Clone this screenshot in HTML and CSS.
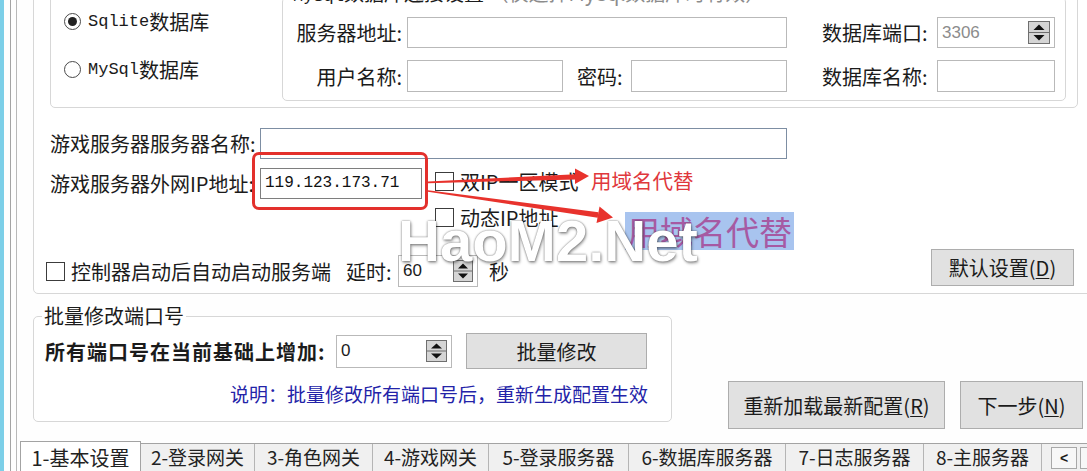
FILE: index.html
```html
<!DOCTYPE html>
<html lang="zh-CN">
<head>
    <meta charset="UTF-8">
    <meta name="viewport" content="width=device-width, initial-scale=1.0">
    <title>基本设置</title>
    <link rel="stylesheet" href="styles.css">
</head>
<body>
<div class="frame">
    <div class="edge">
        <span class="edge-blue"></span>
        <span class="edge-line"></span>
        <span class="edge-line second"></span>
    </div>

    <div class="dialog">
        <div class="sheet">
            <!-- 数据库 + 游戏服务器参数 -->
            <div class="group setup">
                <div class="group db-group">
                    <div class="db-kinds">
                        <div class="radio"><span class="radio-dot checked"></span><span class="mono">Sqlite</span>数据库</div>
                        <div class="radio"><span class="radio-dot"></span><span class="mono">MySql</span>数据库</div>
                    </div>

                    <div class="group mysql-box">
                        <div class="group-title"><span class="mono">MySql</span>数据库连接设置 <span class="muted">（仅选择MySql数据库时有效）</span></div>
                        <div class="field-row">
                            <span class="field-label addr-label">服务器地址:</span>
                            <span class="text-box addr-box"></span>
                            <span class="field-label port-label">数据库端口:</span>
                            <span class="text-box spin port-spin">
                                <span class="spin-value muted">3306</span>
                                <svg class="spin-btn" width="22" height="23" viewBox="0 0 22 23">
                                    <rect x="0.5" y="0.5" width="21" height="22" fill="#d5d5d5" stroke="#6f6f6f"/>
                                    <line x1="1" y1="11.5" x2="21" y2="11.5" stroke="#6f6f6f"/>
                                    <path d="M5.5 9 L11 3.5 L16.5 9 Z" fill="#111"/>
                                    <path d="M5.5 14 L16.5 14 L11 19.5 Z" fill="#111"/>
                                </svg>
                            </span>
                        </div>
                        <div class="field-row">
                            <span class="field-label user-label">用户名称:</span>
                            <span class="text-box user-box"></span>
                            <span class="field-label pass-label">密码:</span>
                            <span class="text-box pass-box"></span>
                            <span class="field-label dbname-label">数据库名称:</span>
                            <span class="text-box dbname-box"></span>
                        </div>
                    </div>
                </div>

                <div class="game-rows">
                    <div class="game-row">
                        <span class="game-label">游戏服务器服务器名称:</span>
                        <span class="text-box name-box"></span>
                    </div>
                    <div class="game-row ip-row">
                        <span class="game-label">游戏服务器外网IP地址:</span>
                        <span class="text-box ip-box">119.123.173.71</span>
                        <div class="ip-options">
                            <div class="check-item"><span class="check"></span>双IP一区模式</div>
                            <div class="check-item"><span class="check"></span>动态IP地址</div>
                        </div>
                    </div>
                </div>

                <div class="auto-row">
                    <span class="check"></span>
                    <span class="auto-text">控制器启动后自动启动服务端</span>
                    <span class="delay-label">延时:</span>
                    <span class="text-box spin delay-spin">
                        <span class="spin-value">60</span>
                        <svg class="spin-btn" width="20" height="22" viewBox="0 0 20 22">
                            <rect x="0.5" y="0.5" width="19" height="21" fill="#d5d5d5" stroke="#6f6f6f"/>
                            <line x1="1" y1="11" x2="19" y2="11" stroke="#6f6f6f"/>
                            <path d="M5 8.5 L10 3.5 L15 8.5 Z" fill="#111"/>
                            <path d="M5 13.5 L15 13.5 L10 18.5 Z" fill="#111"/>
                        </svg>
                    </span>
                    <span class="sec-label">秒</span>
                    <span class="btn default-btn">默认设置(<u>D</u>)</span>
                </div>
            </div>

            <div class="lower">
                <div class="group batch">
                    <div class="group-title">批量修改端口号</div>
                    <div class="batch-row">
                        <span class="batch-label">所有端口号在当前基础上增加:</span>
                        <span class="text-box spin batch-spin">
                            <span class="spin-value">0</span>
                            <svg class="spin-btn" width="21" height="22" viewBox="0 0 21 22">
                                <rect x="0.5" y="0.5" width="20" height="21" fill="#d5d5d5" stroke="#6f6f6f"/>
                                <line x1="1" y1="11" x2="20" y2="11" stroke="#6f6f6f"/>
                                <path d="M5 8.5 L10.5 3.5 L16 8.5 Z" fill="#111"/>
                                <path d="M5 13.5 L16 13.5 L10.5 18.5 Z" fill="#111"/>
                            </svg>
                        </span>
                        <span class="btn batch-btn">批量修改</span>
                    </div>
                    <div class="batch-note">说明：批量修改所有端口号后，重新生成配置生效</div>
                </div>

                <div class="actions">
                    <span class="btn reload-btn">重新加载最新配置(<u>R</u>)</span>
                    <span class="btn next-btn">下一步(<u>N</u>)</span>
                </div>
            </div>
        </div>

        <div class="tabs">
            <div class="tab active tab-1">1-基本设置</div>
            <div class="tab tab-2">2-登录网关</div>
            <div class="tab tab-3">3-角色网关</div>
            <div class="tab tab-4">4-游戏网关</div>
            <div class="tab tab-5">5-登录服务器</div>
            <div class="tab tab-6">6-数据库服务器</div>
            <div class="tab tab-7">7-日志服务器</div>
            <div class="tab tab-8">8-主服务器</div>
            <div class="tab-scroll">
                <span class="scroll-btn">&lt;</span>
                <span class="scroll-btn">&gt;</span>
            </div>
        </div>
    </div>

    <!-- 标注 -->
    <div class="mark-box"></div>
    <svg class="mark-arrows" width="1087" height="471" viewBox="0 0 1087 471">
        <polygon points="428,181.6 576,174.2 576,179.4 428,183.2" fill="#e8322c"/>
        <polygon points="575,168.5 589,176 575,184" fill="#e8322c"/>
        <polygon points="428,190.3 598.5,212.2 597.7,217.8 427.9,191.8" fill="#e8322c"/>
        <polygon points="599.5,206.5 613,217.5 596.5,223" fill="#e8322c"/>
    </svg>
    <div class="mark-note">用域名代替</div>
    <div class="mark-select">用域名代替</div>
    <div class="watermark">HaoM2.Net</div>
</div>
</body>
</html>
```

FILE: styles.css
```css
* {
    box-sizing: border-box;
}

body {
    margin: 0;
    background: #fff;
    font-family: "Noto Sans CJK SC", "Noto Sans", sans-serif;
    font-size: 20px;
    color: #1b1b1b;
}

.frame {
    position: relative;
    display: flex;
    width: 1087px;
    height: 471px;
    overflow: hidden;
    background: #fefefe;
}

/* 左边的窗口边框 */
.edge {
    display: flex;
    flex: none;
    width: 20px;
}
.edge-blue {
    width: 4px;
    background: #7ccfe8;
}
.edge-line {
    width: 1px;
    margin-left: 6px;
    background: #a4a4a4;
}
.edge-line.second {
    margin-left: 5px;
    background: #b9b9b9;
}

.dialog {
    flex: 1;
    min-width: 0;
    display: flex;
    flex-direction: column;
}
.sheet {
    flex: 1;
}

.mono {
    font-family: "Liberation Mono", monospace;
    font-size: 17px;
}
.muted {
    color: #8c8c8c;
}

/* 分组框 */
.group {
    position: relative;
    border: 1px solid #d7d7d7;
    border-radius: 5px;
    background: #fff;
}
.group-title {
    position: absolute;
    top: -12px;
    left: 8px;
    padding: 0 2px;
    background: #fff;
    line-height: 22px;
    white-space: nowrap;
}

.setup {
    margin: -20px -30px 0 13px;
    padding: 5px 0 6px 16px;
}

.db-group {
    display: flex;
    width: 1028px;
    padding: 10px 0 6px 13px;
}
.db-kinds {
    width: 218px;
    padding-top: 9px;
    display: flex;
    flex-direction: column;
    gap: 18px;
}
.radio {
    display: flex;
    align-items: center;
    height: 30px;
    white-space: nowrap;
}
.radio-dot {
    display: flex;
    align-items: center;
    justify-content: center;
    width: 17px;
    height: 17px;
    margin-right: 7px;
    border: 1px solid #4a4a4a;
    border-radius: 50%;
    background: #fff;
}
.radio-dot.checked::after {
    content: "";
    width: 9px;
    height: 9px;
    border-radius: 50%;
    background: #222;
}

.mysql-box {
    width: 784px;
    height: 104px;
    padding-top: 19px;
}
.mysql-box .group-title {
    top: -16px;
}
.field-row {
    display: flex;
    align-items: center;
    height: 31px;
}
.field-row + .field-row {
    height: 32px;
    margin-top: 12px;
}
.field-label {
    flex: none;
    white-space: nowrap;
}
.addr-label, .user-label {
    width: 119px;
    margin-right: 5px;
    text-align: right;
}
.port-label, .dbname-label {
    width: 110px;
    margin: 0 5px 0 35px;
}
.pass-label {
    width: 49px;
    margin: 0 5px 0 14px;
}

.text-box {
    flex: none;
    height: 100%;
    border: 1px solid #b9b9b9;
    background: #fff;
}
.addr-box {
    width: 380px;
}
.user-box, .pass-box {
    width: 156px;
}
.port-spin, .dbname-box {
    width: 118px;
}

/* 数字框 */
.spin {
    display: flex;
    align-items: center;
    justify-content: space-between;
    padding: 0 4px;
}
.spin-value {
    font-family: "Liberation Sans", sans-serif;
    font-size: 17px;
}
.spin-btn {
    display: block;
    flex: none;
}

/* 游戏服务器 */
.game-rows {
    margin-top: 20px;
}
.game-row {
    display: flex;
    align-items: flex-start;
}
.game-label {
    flex: none;
    width: 205px;
    height: 31px;
    margin-right: 5px;
    line-height: 31px;
    white-space: nowrap;
}
.name-box {
    width: 527px;
    height: 31px;
    border-color: #7d8ea3;
}
.ip-row {
    height: 61px;
    margin-top: 9px;
}
.ip-box {
    width: 162px;
    height: 31px;
    padding-left: 4px;
    border-color: #7e7e7e;
    font-family: "Liberation Mono", monospace;
    font-size: 16px;
    line-height: 29px;
    color: #111;
}
.ip-options {
    display: flex;
    flex-direction: column;
    gap: 16px;
    margin-left: 13px;
    padding-top: 3px;
}
.check-item {
    display: flex;
    align-items: center;
    height: 20px;
    white-space: nowrap;
}
.check {
    flex: none;
    width: 19px;
    height: 19px;
    margin-right: 6px;
    border: 1px solid #3c3c3c;
    background: #fff;
}

.auto-row {
    display: flex;
    align-items: center;
    width: 1028px;
    height: 32px;
    margin: 26px 0 0 -4px;
}
.auto-text {
    flex: none;
    width: 275px;
    white-space: nowrap;
}
.delay-label {
    flex: none;
    width: 52px;
}
.delay-spin {
    width: 80px;
}
.sec-label {
    margin-left: 11px;
}

/* 按钮 */
.btn {
    display: flex;
    align-items: center;
    justify-content: center;
    flex: none;
    background: #e1e1e1;
    border: 1px solid #adadad;
    white-space: nowrap;
    color: #1b1b1b;
}
.btn u {
    text-decoration-thickness: 1px;
    text-underline-offset: 2px;
}
.default-btn {
    align-self: flex-start;
    width: 143px;
    height: 37px;
    margin: -6px 0 0 auto;
}

/* 批量修改端口 */
.lower {
    display: flex;
    margin: 22px 0 0 13px;
}
.batch {
    flex: none;
    width: 639px;
    height: 106px;
    padding: 16px 0 0 10px;
}
.batch-row {
    display: flex;
    align-items: center;
    height: 36px;
}
.batch-label {
    flex: none;
    width: 292px;
    padding-left: 1px;
    font-weight: bold;
    letter-spacing: 1px;
    white-space: nowrap;
}
.batch-spin {
    width: 116px;
    height: 33px;
}
.batch-btn {
    width: 181px;
    height: 36px;
    margin-left: 14px;
}
.batch-note {
    width: 604px;
    margin-top: 14px;
    text-align: right;
    color: #2323a8;
    font-size: 19px;
    line-height: 22px;
}

.actions {
    display: flex;
    gap: 15px;
    margin: 65px 0 0 56px;
}
.actions .btn {
    height: 48px;
}
.reload-btn {
    width: 217px;
}
.next-btn {
    width: 123px;
}

/* 底部选项卡 */
.tabs {
    flex: none;
    display: flex;
    height: 28px;
    border-top: 1px solid #a3a3a3;
    background: #f0f0f0;
}
.tab {
    flex: none;
    height: 100%;
    border-right: 1px solid #b5b5b5;
    text-align: center;
    line-height: 26px;
    font-size: 19px;
    color: #222;
    white-space: nowrap;
}
.tab.active {
    position: relative;
    height: 31px;
    margin-top: -3px;
    border: 1px solid #a3a3a3;
    border-bottom: none;
    background: #fff;
    font-size: 20px;
    line-height: 32px;
}
.tab-1 { width: 121px; }
.tab-2 { width: 114px; }
.tab-3 { width: 118px; }
.tab-4 { width: 116px; }
.tab-5 { width: 140px; }
.tab-6 { width: 157px; }
.tab-7 { width: 138px; }
.tab-8 { width: 118px; }
.tab-scroll {
    display: flex;
    gap: 3px;
    margin: 3px 0 0 9px;
}
.scroll-btn {
    width: 26px;
    height: 22px;
    border: 1px solid #a8a8a8;
    background: #f7f7f7;
    font-family: "Liberation Sans", sans-serif;
    font-size: 14px;
    font-weight: bold;
    line-height: 20px;
    text-align: center;
}

/* 红框、箭头和文字标注 */
.mark-box {
    position: absolute;
    left: 252px;
    top: 152px;
    width: 176px;
    height: 58px;
    border: 3px solid #e3302c;
    border-radius: 7px;
}
.mark-arrows {
    position: absolute;
    left: 0;
    top: 0;
}
.mark-note {
    position: absolute;
    left: 591px;
    top: 168px;
    color: #e0383c;
    font-size: 20.5px;
    line-height: 24px;
}
.mark-select {
    position: absolute;
    left: 625px;
    top: 212px;
    height: 38px;
    padding: 0 2px;
    background: #a8c4ef;
    color: #a65aa3;
    font-size: 33px;
    line-height: 38px;
}
.watermark {
    position: absolute;
    left: 398px;
    top: 212px;
    font-family: "Liberation Sans", sans-serif;
    font-weight: bold;
    font-size: 58px;
    line-height: 58px;
    color: #fff;
    text-shadow: 0 0 2px rgba(40, 40, 40, 0.7), 1px 2px 3px rgba(0, 0, 0, 0.35);
}
```
